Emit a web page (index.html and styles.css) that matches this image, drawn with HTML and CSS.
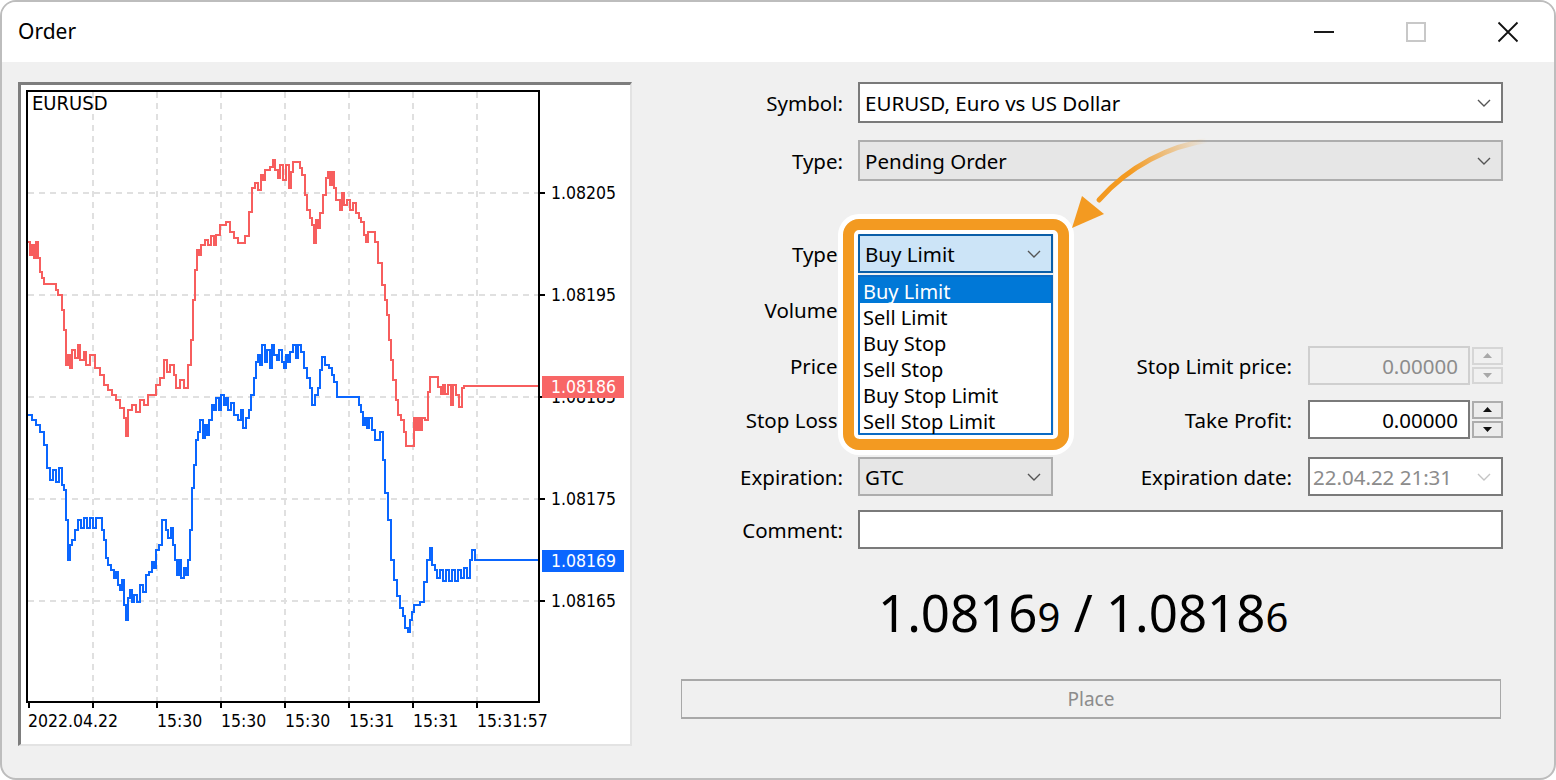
FILE: index.html
```html
<!DOCTYPE html>
<html>
<head>
<meta charset="utf-8">
<title>Order</title>
<link rel="stylesheet" href="styles.css">
</head>
<body>
<div class="window">
  <div class="titlebar">
    <div class="title">Order</div>
    <div class="controls">
      <span class="ctl"><svg width="22" height="4" viewBox="0 0 22 4"><line x1="1" y1="2" x2="21" y2="2" stroke="#1a1a1a" stroke-width="2"/></svg></span>
      <span class="ctl"><svg width="20" height="20" viewBox="0 0 20 20"><rect x="1" y="1" width="18" height="18" fill="none" stroke="#c8c8c8" stroke-width="2"/></svg></span>
      <span class="ctl"><svg width="22" height="22" viewBox="0 0 22 22"><path d="M1.5 1.5 L20.5 20.5 M20.5 1.5 L1.5 20.5" stroke="#111" stroke-width="1.8" fill="none"/></svg></span>
    </div>
  </div>
  <div class="client">
    <div class="chart-panel">
      <svg class="chart" width="609" height="659" viewBox="21 85 609 659">
        <g class="grid">
          <line x1="93" y1="92" x2="93" y2="701"/>
          <line x1="157" y1="92" x2="157" y2="701"/>
          <line x1="221" y1="92" x2="221" y2="701"/>
          <line x1="285" y1="92" x2="285" y2="701"/>
          <line x1="349" y1="92" x2="349" y2="701"/>
          <line x1="413" y1="92" x2="413" y2="701"/>
          <line x1="477" y1="92" x2="477" y2="701"/>
          <line x1="28" y1="193" x2="538" y2="193"/>
          <line x1="28" y1="295" x2="538" y2="295"/>
          <line x1="28" y1="397" x2="538" y2="397"/>
          <line x1="28" y1="499" x2="538" y2="499"/>
          <line x1="28" y1="601" x2="538" y2="601"/>
        </g>
        <polyline class="ask" points="28,242 30,242 30,255 32,255 32,245 34,245 34,258 36,258 36,242 38,242 38,258 40,258 40,272 42,272 42,278 44,278 44,284 56,284 56,290 58,290 58,295 62,295 62,310 64,310 64,330 66,330 66,365 68,365 68,355 70,355 70,368 72,368 72,350 75,350 75,358 78,358 78,345 80,345 80,360 84,360 84,352 86,352 86,365 90,365 90,355 95,355 95,368 100,368 100,375 104,375 104,385 108,385 108,390 112,390 112,395 116,395 116,400 120,400 120,408 124,408 124,418 126,418 126,436 128,436 128,410 132,410 132,405 136,405 136,412 140,412 140,400 144,400 144,405 148,405 148,395 156,395 156,385 160,385 160,378 164,378 164,360 167,360 167,372 170,372 170,365 174,365 174,375 176,375 176,388 180,388 180,380 184,380 184,388 188,388 188,365 191,365 191,340 193,340 193,300 195,300 195,270 197,270 197,250 199,250 199,255 201,255 201,245 205,245 205,240 208,240 208,245 211,245 211,236 214,236 214,245 216,245 216,235 220,235 220,225 226,225 226,222 230,222 230,232 234,232 234,238 238,238 238,243 245,243 245,236 249,236 249,212 252,212 252,188 255,188 255,183 258,183 258,190 261,190 261,175 263,175 263,180 265,180 265,170 270,170 270,167 273,167 273,160 275,160 275,170 278,170 278,178 280,178 280,165 283,165 283,180 286,180 286,165 289,165 289,188 291,188 291,172 293,172 293,162 300,162 300,168 302,168 302,175 305,175 305,195 307,195 307,210 310,210 310,218 312,218 312,225 314,225 314,243 316,243 316,220 318,220 318,228 320,228 320,213 323,213 323,195 326,195 326,178 328,178 328,172 330,172 330,185 332,185 332,172 334,172 334,188 336,188 336,200 340,200 340,210 342,210 342,193 344,193 344,205 347,205 347,200 350,200 350,210 353,210 353,203 356,203 356,213 359,213 359,218 361,218 361,222 364,222 364,235 366,235 366,242 368,242 368,232 375,232 375,242 378,242 378,263 382,263 382,285 385,285 385,300 387,300 387,315 389,315 389,340 391,340 391,360 393,360 393,380 396,380 396,400 398,400 398,415 401,415 401,420 404,420 404,432 406,432 406,446 414,446 414,418 416,418 416,430 418,430 418,418 420,418 420,430 422,430 422,418 425,418 425,420 428,420 428,392 430,392 430,377 438,377 438,387 441,387 441,394 443,394 443,385 445,385 445,394 448,394 448,385 451,385 451,405 453,405 453,385 456,385 456,395 459,395 459,407 462,407 462,388 464,388 464,386 538,386"/>
        <polyline class="bid" points="28,415 32,415 32,420 36,420 36,425 40,425 40,432 44,432 44,445 47,445 47,468 50,468 50,480 53,480 53,470 56,470 56,482 59,482 59,468 62,468 62,485 64,485 64,490 66,490 66,520 68,520 68,560 70,560 70,545 72,545 72,540 75,540 75,530 78,530 78,520 81,520 81,528 84,528 84,518 87,518 87,528 90,528 90,518 93,518 93,528 96,528 96,518 102,518 102,530 104,530 104,540 106,540 106,558 108,558 108,565 111,565 111,570 114,570 114,578 116,578 116,572 118,572 118,585 120,585 120,590 122,590 122,580 124,580 124,605 126,605 126,620 128,620 128,598 130,598 130,590 132,590 132,602 134,602 134,595 137,595 137,602 140,602 140,585 143,585 143,592 146,592 146,575 149,575 149,572 152,572 152,562 154,562 154,568 156,568 156,550 159,550 159,545 162,545 162,520 166,520 166,530 168,530 168,538 171,538 171,528 173,528 173,545 175,545 175,560 177,560 177,575 179,575 179,560 181,560 181,578 184,578 184,568 186,568 186,575 188,575 188,560 190,560 190,530 192,530 192,488 194,488 194,465 196,465 196,440 198,440 198,432 200,432 200,420 203,420 203,438 205,438 205,425 207,425 207,435 209,435 209,420 212,420 212,405 214,405 214,410 216,410 216,398 219,398 219,410 221,410 221,395 224,395 224,405 226,405 226,398 228,398 228,410 231,410 231,403 234,403 234,415 238,415 238,420 241,420 241,410 243,410 243,428 246,428 246,418 249,418 249,410 251,410 251,395 254,395 254,378 256,378 256,362 258,362 258,355 260,355 260,365 262,365 262,345 265,345 265,362 267,362 267,350 270,350 270,368 272,368 272,345 274,345 274,355 277,355 277,360 279,360 279,350 282,350 282,362 284,362 284,368 286,368 286,355 288,355 288,362 290,362 290,352 293,352 293,345 296,345 296,358 298,358 298,345 301,345 301,352 304,352 304,368 307,368 307,378 310,378 310,388 312,388 312,405 315,405 315,395 318,395 318,388 320,388 320,370 322,370 322,357 325,357 325,365 329,365 329,368 332,368 332,375 334,375 334,382 337,382 337,397 359,397 359,405 361,405 361,412 363,412 363,425 365,425 365,418 367,418 367,428 369,428 369,418 372,418 372,430 375,430 375,440 380,440 380,432 383,432 383,460 385,460 385,493 388,493 388,520 391,520 391,560 394,560 394,580 397,580 397,596 400,596 400,608 403,608 403,616 405,616 405,628 408,628 408,632 410,632 410,620 412,620 412,612 414,612 414,605 420,605 420,602 424,602 424,582 427,582 427,560 430,560 430,548 432,548 432,565 435,565 435,570 437,570 437,578 440,578 440,570 443,570 443,581 446,581 446,570 449,570 449,581 452,581 452,570 455,570 455,581 458,581 458,570 461,570 461,578 464,578 464,568 467,568 467,578 470,578 470,560 472,560 472,550 475,550 475,560 538,560"/>
        <rect class="frame" x="27" y="91" width="512" height="611"/>
        <g class="ticks">
          <line x1="540" y1="193" x2="545" y2="193"/>
          <line x1="540" y1="295" x2="545" y2="295"/>
          <line x1="540" y1="397" x2="545" y2="397"/>
          <line x1="540" y1="499" x2="545" y2="499"/>
          <line x1="540" y1="601" x2="545" y2="601"/>
          <line x1="29" y1="703" x2="29" y2="708"/>
          <line x1="93" y1="703" x2="93" y2="708"/>
          <line x1="157" y1="703" x2="157" y2="708"/>
          <line x1="221" y1="703" x2="221" y2="708"/>
          <line x1="285" y1="703" x2="285" y2="708"/>
          <line x1="349" y1="703" x2="349" y2="708"/>
          <line x1="413" y1="703" x2="413" y2="708"/>
          <line x1="477" y1="703" x2="477" y2="708"/>
        </g>
        <text class="axis sym" x="32" y="110">EURUSD</text>
        <text class="axis" x="551" y="199">1.08205</text>
        <text class="axis" x="551" y="301">1.08195</text>
        <text class="axis" x="551" y="403">1.08185</text>
        <text class="axis" x="551" y="505">1.08175</text>
        <text class="axis" x="551" y="607">1.08165</text>
        <rect class="tag-ask" x="542" y="376" width="82" height="22"/>
        <text class="axis tag-text" x="551" y="393">1.08186</text>
        <rect class="tag-bid" x="542" y="550" width="82" height="22"/>
        <text class="axis tag-text" x="551" y="567">1.08169</text>
        <text class="axis" x="28" y="727">2022.04.22</text>
        <text class="axis" x="157" y="727">15:30</text>
        <text class="axis" x="221" y="727">15:30</text>
        <text class="axis" x="285" y="727">15:30</text>
        <text class="axis" x="349" y="727">15:31</text>
        <text class="axis" x="413" y="727">15:31</text>
        <text class="axis" x="477" y="727">15:31:57</text>
      </svg>
    </div>

    <div class="form">
      <div class="row h41">
        <label class="lbl">Symbol:</label>
        <div class="field select span-all">EURUSD, Euro vs US Dollar<svg class="chev" width="14" height="8" viewBox="0 0 14 8"><path d="M1 1 L7 7 L13 1"/></svg></div>
      </div>
      <div class="row h41 mt17">
        <label class="lbl">Type:</label>
        <div class="field select disabled span-all">Pending Order<svg class="chev" width="14" height="8" viewBox="0 0 14 8"><path d="M1 1 L7 7 L13 1"/></svg></div>
      </div>
      <div class="row h39 mt53">
        <label class="lbl">Type:</label>
        <div class="combo">
          <div class="field select open">Buy Limit<svg class="chev" width="14" height="8" viewBox="0 0 14 8"><path d="M1 1 L7 7 L13 1"/></svg></div>
          <ul class="list">
            <li class="sel">Buy Limit</li>
            <li>Sell Limit</li>
            <li>Buy Stop</li>
            <li>Sell Stop</li>
            <li>Buy Stop Limit</li>
            <li>Sell Stop Limit</li>
          </ul>
        </div>
      </div>
      <div class="row h40 mt17">
        <label class="lbl">Volume:</label>
        <div class="field num"></div>
      </div>
      <div class="row h39 mt16">
        <label class="lbl">Price:</label>
        <div class="field num"></div>
        <label class="lbl lbl2">Stop Limit price:</label>
        <div class="spin-field disabled">
          <div class="field num">0.00000</div>
          <div class="spin">
            <span class="sb"><svg width="9" height="5" viewBox="0 0 9 5"><path d="M0 5 L4.5 0 L9 5Z"/></svg></span>
            <span class="sb"><svg width="9" height="5" viewBox="0 0 9 5"><path d="M0 0 L4.5 5 L9 0Z"/></svg></span>
          </div>
        </div>
      </div>
      <div class="row h39 mt15">
        <label class="lbl">Stop Loss:</label>
        <div class="field num"></div>
        <label class="lbl lbl2">Take Profit:</label>
        <div class="spin-field">
          <div class="field num">0.00000</div>
          <div class="spin">
            <span class="sb"><svg width="9" height="5" viewBox="0 0 9 5"><path d="M0 5 L4.5 0 L9 5Z"/></svg></span>
            <span class="sb"><svg width="9" height="5" viewBox="0 0 9 5"><path d="M0 0 L4.5 5 L9 0Z"/></svg></span>
          </div>
        </div>
      </div>
      <div class="row h39 mt18">
        <label class="lbl">Expiration:</label>
        <div class="field select disabled">GTC<svg class="chev" width="14" height="8" viewBox="0 0 14 8"><path d="M1 1 L7 7 L13 1"/></svg></div>
        <label class="lbl lbl2">Expiration date:</label>
        <div class="field select date">22.04.22 21:31<svg class="chev" width="14" height="8" viewBox="0 0 14 8"><path d="M1 1 L7 7 L13 1"/></svg></div>
      </div>
      <div class="row h39 mt14">
        <label class="lbl">Comment:</label>
        <div class="field span-all"></div>
      </div>
      <div class="quote"><span>1.0816</span><span class="small">9</span> / <span>1.0818</span><span class="small">6</span></div>
      <button class="place">Place</button>

      <div class="highlight"></div>
      <svg class="arrow" width="170" height="110" viewBox="0 0 170 110">
        <defs>
          <linearGradient id="fade" gradientUnits="userSpaceOnUse" x1="148" y1="12" x2="70" y2="40">
            <stop offset="0" stop-color="#f39a21" stop-opacity="0"/>
            <stop offset="1" stop-color="#f39a21" stop-opacity="1"/>
          </linearGradient>
        </defs>
        <path d="M150 12 C 110 18, 70 38, 40 72" fill="none" stroke="url(#fade)" stroke-width="5" stroke-linecap="round"/>
        <polygon points="13,100 23,68 45,86" fill="#f39a21"/>
      </svg>
    </div>
  </div>
</div>
</body>
</html>
```

FILE: styles.css
```css
* { box-sizing: border-box; }
html, body { margin: 0; padding: 0; background: #fff; }
body {
  width: 1556px;
  height: 780px;
  overflow: hidden;
  font-family: "Noto Sans", "Open Sans", sans-serif;
  color: #000;
}
.window {
  width: 1556px;
  height: 780px;
  border: 2px solid #bdbdbd;
  border-radius: 16px;
  overflow: hidden;
  display: flex;
  flex-direction: column;
  background: #f0f0f0;
}
.titlebar {
  height: 60px;
  flex: none;
  background: #fff;
  display: flex;
  align-items: center;
}
.title {
  flex: 1;
  padding-left: 16px;
  font-size: 21px;
  line-height: 1;
  padding-bottom: 2px;
}
.controls { display: flex; height: 100%; }
.ctl {
  width: 92px;
  display: flex;
  align-items: center;
  justify-content: center;
}
.ctl svg { display: block; }

.client {
  flex: 1;
  display: flex;
  align-items: flex-start;
  padding: 20px 0 0 16px;
}
.chart-panel {
  width: 614px;
  height: 664px;
  border-style: solid;
  border-width: 3px 2px 2px 3px;
  border-color: #7d7d7d #e3e3e3 #e3e3e3 #7d7d7d;
  background: #fff;
}
.chart { display: block; }
.grid line { stroke: #e0e0e0; stroke-width: 2; stroke-dasharray: 6 5; }
.ask, .bid { fill: none; stroke-width: 2; shape-rendering: crispEdges; }
.ask { stroke: #f75e5e; }
.bid { stroke: #0a66ff; }
.frame { fill: none; stroke: #000; stroke-width: 2; }
.ticks line { stroke: #000; stroke-width: 2; }
.axis {
  font-family: "DejaVu Sans Condensed", "DejaVu Sans", sans-serif;
  font-stretch: condensed;
  font-size: 17.5px;
  fill: #000;
}
.axis.sym { font-size: 20px; }
.tag-ask { fill: #f86666; }
.tag-bid { fill: #0a66ff; }
.axis.tag-text { fill: #fff; }

.form {
  position: relative;
  margin-left: 28px;
  width: 843px;
  display: flex;
  flex-direction: column;
}
.row {
  display: grid;
  grid-template-columns: 198px 195px 255px 195px;
  align-items: center;
}
.h41 { height: 41px; }
.h40 { height: 40px; }
.h39 { height: 39px; }
.mt14 { margin-top: 14px; }
.mt15 { margin-top: 15px; }
.mt16 { margin-top: 16px; }
.mt17 { margin-top: 17px; }
.mt18 { margin-top: 18px; }
.mt53 { margin-top: 53px; }

.lbl {
  text-align: right;
  padding-right: 15px;
  font-size: 20.5px;
  white-space: nowrap;
}
.lbl2 { padding-right: 16px; }
.span-all { grid-column: 2 / -1; }

.field {
  height: 100%;
  border: 2px solid #7a7a7a;
  background: #fff;
  display: flex;
  align-items: center;
  padding: 0 5px;
  font-size: 20.5px;
  white-space: nowrap;
}
.select { justify-content: space-between; padding-right: 10px; }
.chev { display: block; flex: none; }
.chev path { fill: none; stroke: #555; stroke-width: 1.4; }
.select.disabled { background: #e6e6e6; border-color: #adadad; }
.select.date { color: #8c8c8c; padding-left: 3px; }
.select.date .chev path { stroke: #c4c4c4; }
.num { justify-content: flex-end; padding-right: 10px; }

.combo { position: relative; height: 100%; }
.select.open { background: #cce4f7; border-color: #0a5ea8; }
.list {
  position: absolute;
  left: 0;
  top: 100%;
  width: 195px;
  margin: 2px 0 0;
  padding: 0;
  list-style: none;
  background: #fff;
  border: 2px solid #0a6ac4;
  font-size: 20px;
  z-index: 2;
}
.list li {
  height: 26px;
  line-height: 26px;
  padding: 2px 0 0 3px;
  white-space: nowrap;
}
.list li.sel { background: #0078d7; color: #fff; }

.spin-field { display: flex; height: 100%; gap: 2px; }
.spin-field .field { width: 162px; flex: none; }
.spin {
  width: 31px;
  display: flex;
  flex-direction: column;
  gap: 2px;
  padding: 1px 0;
}
.sb {
  flex: 1;
  border: 2px solid #adadad;
  background: #ececec;
  display: flex;
  align-items: center;
  justify-content: center;
}
.sb svg { display: block; fill: #111; }
.spin-field.disabled .field { background: #f0f0f0; border-color: #cfcfcf; color: #8c8c8c; }
.spin-field.disabled .sb { border-color: #d6d6d6; background: #f0f0f0; }
.spin-field.disabled .sb svg { fill: #a8a8a8; }

.quote {
  margin-top: 33px;
  height: 60px;
  line-height: 60px;
  padding-left: 218px;
  font-size: 51px;
  white-space: nowrap;
}
.quote .small { font-size: 40px; }

.place {
  margin: 37px 2px 0 21px;
  height: 40px;
  background: #f0f0f0;
  border-style: solid;
  border-width: 2px 1px;
  border-color: #a8a8a8;
  font-family: "Noto Sans", "Open Sans", sans-serif;
  font-size: 19px;
  color: #8c8c8c;
}

.highlight {
  position: absolute;
  left: 183px;
  top: 137px;
  width: 226px;
  height: 231px;
  border: 11px solid #f39a21;
  border-radius: 16px;
  box-shadow: 0 0 0 5px #fff, inset 0 0 0 4px #fff;
  z-index: 3;
  pointer-events: none;
}
.arrow {
  position: absolute;
  left: 399px;
  top: 46px;
  z-index: 4;
}
```
